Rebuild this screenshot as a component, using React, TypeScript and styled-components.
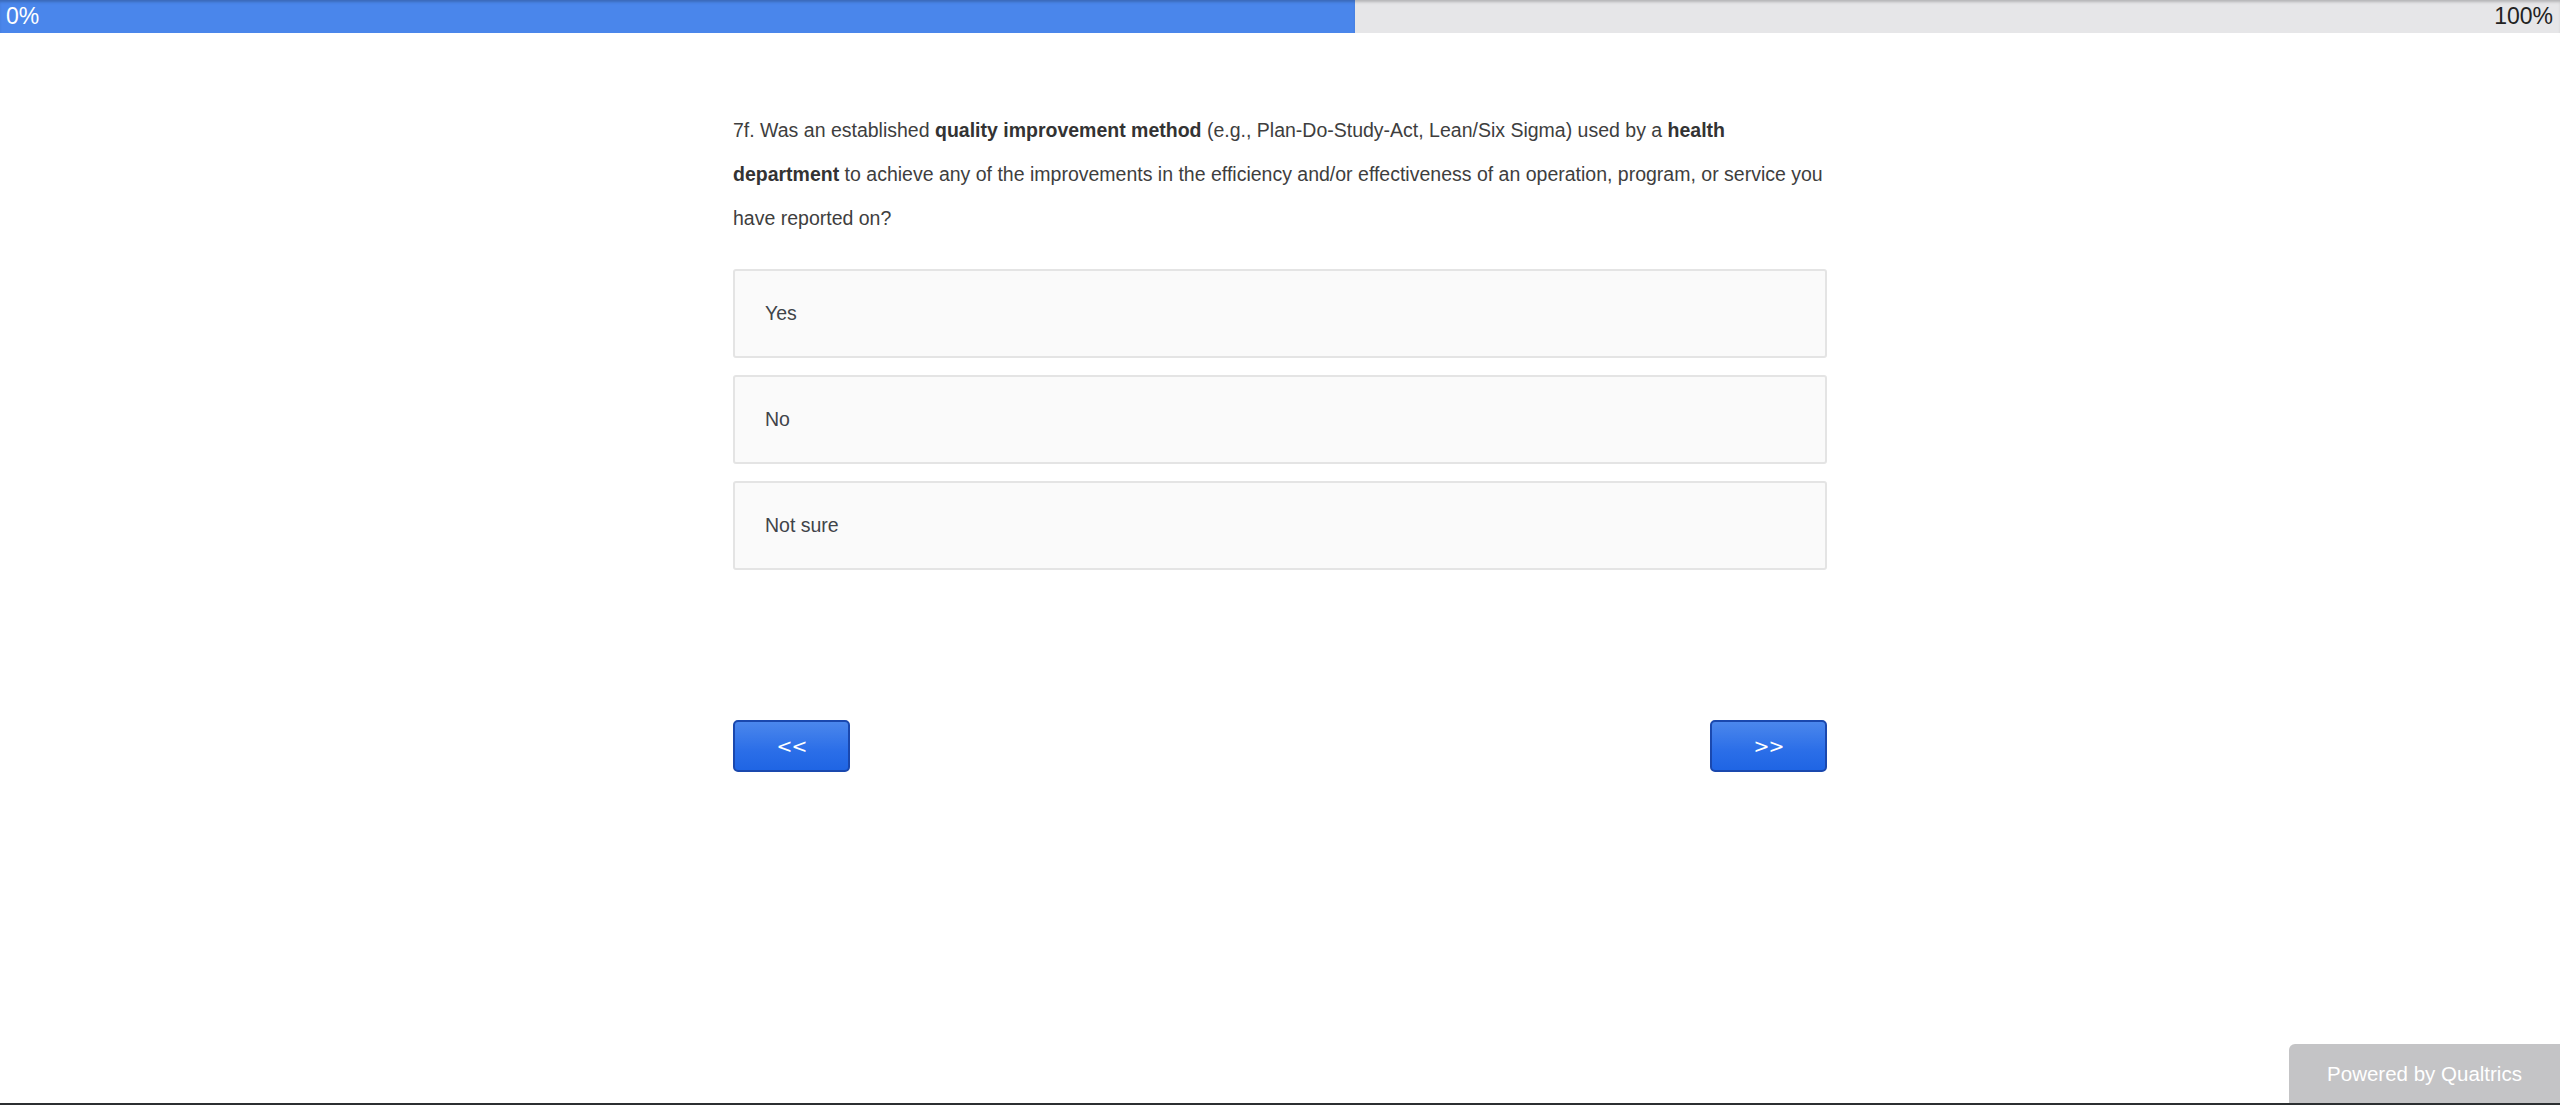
import React from "react";
import styled, { createGlobalStyle } from "styled-components";

const GlobalStyle = createGlobalStyle`
  html, body {
    margin: 0;
    padding: 0;
    height: 100%;
    overflow: hidden;
    background: #ffffff;
  }
  body {
    font-family: "Liberation Sans", Arial, Helvetica, sans-serif;
  }
  #root {
    height: 100%;
  }
`;

const Page = styled.div`
  height: 100%;
  display: flex;
  flex-direction: column;
`;

const ProgressBar = styled.div`
  position: relative;
  flex: none;
  height: 33px;
  background: #e6e6e8;
  box-shadow: inset 0 3px 3px -1px rgba(0, 0, 0, 0.22);
  display: flex;
  align-items: center;
  justify-content: space-between;
  font-size: 23px;
  line-height: 33px;
`;

const ProgressFill = styled.div`
  position: absolute;
  left: 0;
  top: 0;
  bottom: 0;
  background: #4a86eb;
  box-shadow: inset 0 3px 3px -1px rgba(0, 0, 0, 0.22);
`;

const ProgressLabel = styled.span<{ $light?: boolean }>`
  position: relative;
  padding: 0 7px 0 6px;
  color: ${(p) => (p.$light ? "#ffffff" : "#222222")};
`;

const Survey = styled.main`
  width: 1094px;
  margin: 0 auto;
  padding-top: 75px;
  display: flex;
  flex-direction: column;
`;

const QuestionText = styled.p`
  margin: 0;
  font-size: 19.5px;
  line-height: 44px;
  color: #3e3e3e;

  strong {
    font-weight: bold;
    color: #333333;
  }
`;

const Choices = styled.div`
  margin-top: 29px;
  display: flex;
  flex-direction: column;
  gap: 17px;
`;

const Choice = styled.label`
  box-sizing: border-box;
  height: 89px;
  display: flex;
  align-items: center;
  padding-left: 30px;
  background: #fafafa;
  border: 2px solid #e4e4e4;
  border-radius: 3px;
  font-size: 19.5px;
  color: #3f4449;
  cursor: pointer;
`;

const NavRow = styled.div`
  margin-top: 150px;
  display: flex;
  justify-content: space-between;
`;

const NavButton = styled.button`
  box-sizing: border-box;
  width: 117px;
  height: 52px;
  border: 2px solid #1a48ae;
  border-radius: 5px;
  background: linear-gradient(to bottom, #4b87ec 0%, #2b6ee8 60%, #1f65e4 100%);
  color: #ffffff;
  font-family: "DejaVu Sans", "Liberation Sans", sans-serif;
  font-size: 19px;
  letter-spacing: -1px;
  cursor: pointer;
`;

const Footer = styled.a`
  position: fixed;
  right: 0;
  bottom: 0;
  width: 271px;
  height: 61px;
  box-sizing: border-box;
  padding-bottom: 2px;
  background: #c4c4c6;
  border-top-left-radius: 6px;
  color: #ffffff;
  font-size: 20.5px;
  display: flex;
  align-items: center;
  justify-content: center;
  text-decoration: none;
`;

const BottomEdge = styled.div`
  position: fixed;
  left: 0;
  right: 0;
  bottom: 0;
  height: 2px;
  background: #2c2f31;
`;

export default function App() {
  const progressWidth = 1355;
  return (
    <>
      <GlobalStyle />
      <Page>
        <ProgressBar>
          <ProgressFill style={{ width: progressWidth }} />
          <ProgressLabel $light>0%</ProgressLabel>
          <ProgressLabel>100%</ProgressLabel>
        </ProgressBar>
        <Survey>
          <QuestionText>
            7f. Was an established <strong>quality improvement method</strong> (e.g., Plan-Do-Study-Act,
            Lean/Six Sigma) used by a <strong>health department</strong> to achieve any of the
            improvements in the efficiency and/or effectiveness of an operation, program, or service
            you have reported on?
          </QuestionText>
          <Choices>
            <Choice>Yes</Choice>
            <Choice>No</Choice>
            <Choice>Not sure</Choice>
          </Choices>
          <NavRow>
            <NavButton>&lt;&lt;</NavButton>
            <NavButton>&gt;&gt;</NavButton>
          </NavRow>
        </Survey>
      </Page>
      <Footer>Powered by Qualtrics</Footer>
      <BottomEdge />
    </>
  );
}
